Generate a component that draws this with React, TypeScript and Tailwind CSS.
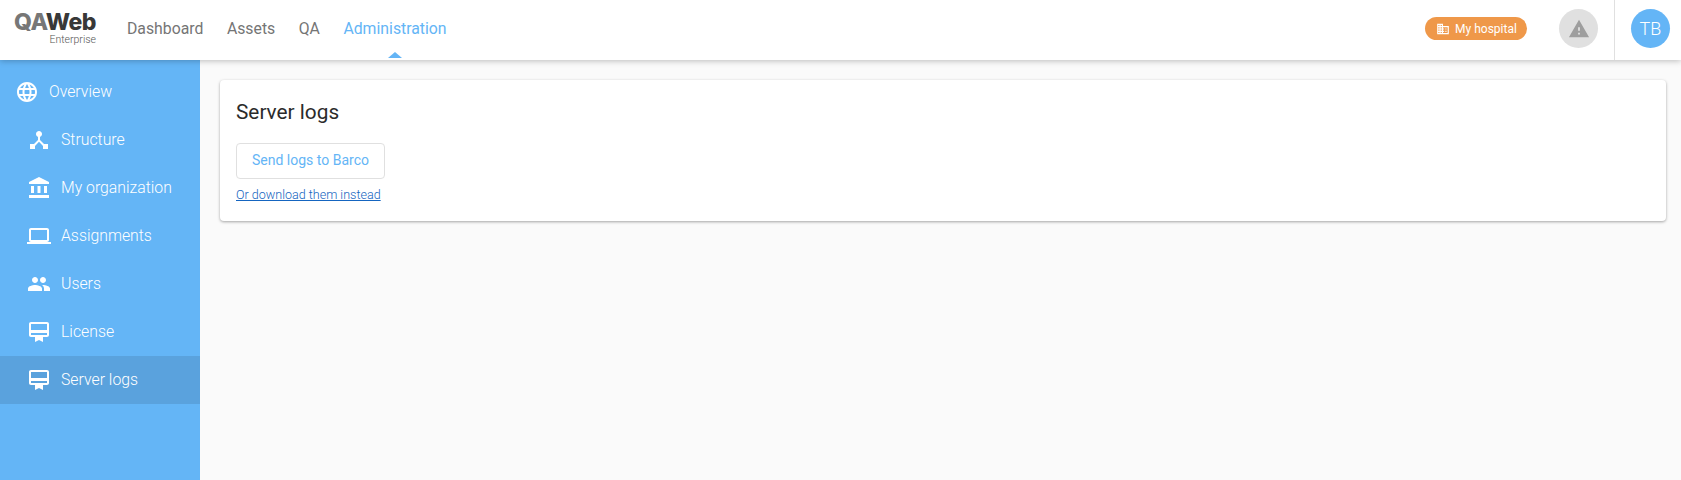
import { MdLanguage, MdDeviceHub, MdAccountBalance, MdLaptop, MdPeople, MdCardMembership, MdDomain, MdWarning } from "react-icons/md";

const items = [
  { label: "Structure", Icon: MdDeviceHub },
  { label: "My organization", Icon: MdAccountBalance },
  { label: "Assignments", Icon: MdLaptop },
  { label: "Users", Icon: MdPeople },
  { label: "License", Icon: MdCardMembership },
  { label: "Server logs", Icon: MdCardMembership, active: true },
];

export default function App() {
  return (
    <div className="flex h-[480px] w-full flex-col overflow-hidden bg-[#fafafa] font-['Roboto',sans-serif]">
      <header className="relative z-10 flex h-[60px] shrink-0 items-center bg-white shadow-[0_1px_6px_rgba(0,0,0,0.25)]">
        <div className="mb-[3px] ml-[15px] flex w-[81px] flex-col items-end">
          <div className="h-[21px] text-[23px] leading-[21px] font-extrabold tracking-[-0.5px] font-['Inter',sans-serif]">
            <span className="text-[#777777]">QA</span>
            <span className="text-[#383838]">Web</span>
          </div>
          <div className="mt-[1px] text-[10.5px] leading-[12px] font-light text-[#555555]">Enterprise</div>
        </div>
        <nav className="mb-[3px] ml-[31px] flex gap-[23.5px] text-[15.8px] text-[#757575]">
          <span>Dashboard</span>
          <span>Assets</span>
          <span>QA</span>
          <span className="relative text-[#64b5f6]">
            Administration
            <span className="absolute top-[35px] left-[45px] h-0 w-0 border-x-[7px] border-b-[6px] border-x-transparent border-b-[#64b5f6]" />
          </span>
        </nav>
        <div className="ml-auto flex h-full items-center">
          <div className="mb-[3px] flex h-[23px] w-[102px] items-center justify-center gap-[5px] rounded-full bg-[#ef9849] pl-[1px] text-[12px] font-normal text-white">
            <MdDomain className="text-[14px]" />
            <span>My hospital</span>
          </div>
          <div className="mb-[3px] ml-8 flex h-[39px] w-[39px] items-center justify-center rounded-full bg-[#e0e0e0] text-[#9e9e9e]">
            <MdWarning className="text-[22px]" />
          </div>
          <div className="mx-4 h-full w-px bg-[#e0e0e0]" />
          <div className="mr-[11px] mb-[3px] flex h-[39px] w-[39px] items-center justify-center rounded-full bg-[#64b5f6] text-lg font-light text-white">
            TB
          </div>
        </div>
      </header>
      <div className="flex min-h-0 flex-1">
        <aside className="w-[200px] shrink-0 bg-[#64b5f6] pt-[8px] text-[15.8px] font-light text-white">
          <div className="flex h-[48px] items-center pl-[15px]">
            <MdLanguage className="mr-[10px] w-6 text-2xl" />
            <span>Overview</span>
          </div>
          {items.map(({ label, Icon, active }) => (
            <div key={label} className={`flex h-[48px] items-center pl-[27px] ${active ? "bg-[#5aa2dd]" : ""}`}>
              <Icon className="mr-[10px] w-6 text-2xl" />
              <span>{label}</span>
            </div>
          ))}
        </aside>
        <main className="flex-1 pt-5 pr-[15px] pl-5">
          <div className="rounded bg-white px-4 pt-[18px] pb-[18px] shadow-[0_1px_3px_rgba(0,0,0,0.35)]">
            <h1 className="text-[20.8px] leading-[28px] font-normal text-[#2b2b2b]">Server logs</h1>
            <button className="mt-[17px] block h-[36px] w-[149px] rounded border border-[#e0e0e0] bg-white pb-[2px] text-sm text-[#64b5f6]">
              Send logs to Barco
            </button>
            <a href="#" className="mt-[8px] block w-fit text-[12.55px] leading-[16px] font-light text-[#1565c0] underline">
              Or download them instead
            </a>
          </div>
        </main>
      </div>
    </div>
  );
}
